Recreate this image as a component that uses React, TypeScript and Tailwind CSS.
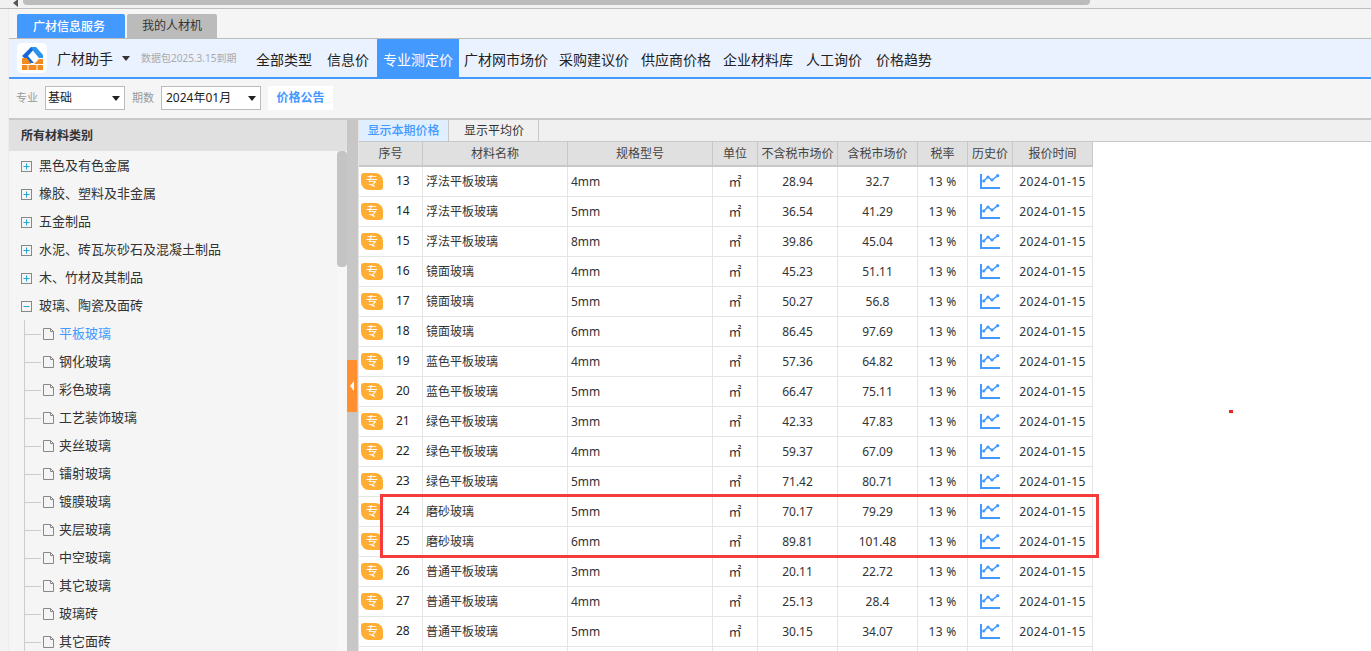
import React from "react";

const navItems = [
  { label: "全部类型", cls: "ml-[6px] mr-[3px]" },
  { label: "信息价", cls: "mr-[2px]" },
  { label: "专业测定价", cls: "bg-[#4499ff] text-white" },
  { label: "广材网市场价", cls: "pl-[5px] pr-[5px]" },
  { label: "采购建议价", cls: "" },
  { label: "供应商价格", cls: "" },
  { label: "企业材料库", cls: "" },
  { label: "人工询价", cls: "ml-[1px]" },
  { label: "价格趋势", cls: "ml-[2px]" },
];

const topCats = ["黑色及有色金属", "橡胶、塑料及非金属", "五金制品", "水泥、砖瓦灰砂石及混凝土制品", "木、竹材及其制品"];
const subCats = ["平板玻璃", "钢化玻璃", "彩色玻璃", "工艺装饰玻璃", "夹丝玻璃", "镭射玻璃", "镀膜玻璃", "夹层玻璃", "中空玻璃", "其它玻璃", "玻璃砖", "其它面砖"];

const rows = [
  [13, "浮法平板玻璃", "4mm", "28.94", "32.7"],
  [14, "浮法平板玻璃", "5mm", "36.54", "41.29"],
  [15, "浮法平板玻璃", "8mm", "39.86", "45.04"],
  [16, "镜面玻璃", "4mm", "45.23", "51.11"],
  [17, "镜面玻璃", "5mm", "50.27", "56.8"],
  [18, "镜面玻璃", "6mm", "86.45", "97.69"],
  [19, "蓝色平板玻璃", "4mm", "57.36", "64.82"],
  [20, "蓝色平板玻璃", "5mm", "66.47", "75.11"],
  [21, "绿色平板玻璃", "3mm", "42.33", "47.83"],
  [22, "绿色平板玻璃", "4mm", "59.37", "67.09"],
  [23, "绿色平板玻璃", "5mm", "71.42", "80.71"],
  [24, "磨砂玻璃", "5mm", "70.17", "79.29"],
  [25, "磨砂玻璃", "6mm", "89.81", "101.48"],
  [26, "普通平板玻璃", "3mm", "20.11", "22.72"],
  [27, "普通平板玻璃", "4mm", "25.13", "28.4"],
  [28, "普通平板玻璃", "5mm", "30.15", "34.07"],
];

const headers = ["序号", "材料名称", "规格型号", "单位", "不含税市场价", "含税市场价", "税率", "历史价", "报价时间"];
const gridCols = "grid grid-cols-[64px_145px_145px_45px_80px_80px_50px_45px_80px] w-[734px]";
const cell = "flex items-center justify-center border-r border-[#e5e5e5] min-w-0";

function Logo() {
  return (
    <svg viewBox="0 0 30 30" className="w-[30px] h-[30px]">
      <rect width="30" height="30" rx="5" fill="#ffffff" />
      <path d="M5 13 L14 4 L19 4 L11 13 L17 20 L13 20 Z" fill="#1769d8" />
      <path d="M14 4 L19 4 L26 12 L26 15 L22 15 L17 9 Z" fill="#2b93ee" />
      <path d="M5 15 H10 L14 21 H17 L22 16 H26 V27 H5 Z" fill="#f58a1f" />
      <path d="M5 21.5 H26 M11 21.5 V27 M20 21.5 V27" stroke="#ffffff" strokeWidth="1" fill="none" />
    </svg>
  );
}

function ChartIcon() {
  return (
    <svg viewBox="0 0 20 15" className="w-[20px] h-[15px]">
      <path d="M1 0 V14 H20" stroke="#4499ff" strokeWidth="2" fill="none" />
      <path d="M3.7 7 L8 3 L12 6 L17.7 1.7" stroke="#4499ff" strokeWidth="1.5" fill="none" />
      <circle cx="3.7" cy="7" r="1.6" fill="#4499ff" />
      <circle cx="8" cy="3" r="1.6" fill="#4499ff" />
      <circle cx="12" cy="6" r="1.6" fill="#4499ff" />
      <circle cx="17.7" cy="1.7" r="1.6" fill="#4499ff" />
    </svg>
  );
}

function ExpandBox({ open }: { open?: boolean }) {
  return (
    <svg viewBox="0 0 11 11" className="w-[11px] h-[11px] shrink-0">
      <rect x="0.5" y="0.5" width="10" height="10" fill="none" stroke="#888888" />
      <path d={open ? "M2.5 5.5 H8.5" : "M2.5 5.5 H8.5 M5.5 2.5 V8.5"} stroke="#22a7d8" />
    </svg>
  );
}

function FileIcon() {
  return (
    <svg viewBox="0 0 11 12" className="w-[11px] h-[12px] shrink-0">
      <path d="M0.5 0.5 H7.5 L10.5 3.5 V11.5 H0.5 Z M7.5 0.5 V3.5 H10.5" fill="none" stroke="#888888" />
    </svg>
  );
}

function FakeSelect({ value, width, pad }: { value: string; width: string; pad: string }) {
  return (
    <div className={`${width} ${pad} h-[24px] bg-white border border-[#bbbbbb] flex items-center justify-between pr-[4px] text-[12px] text-[#222]`}>
      <span>{value}</span>
      <span className="w-0 h-0 border-l-[4px] border-r-[4px] border-t-[5px] border-l-transparent border-r-transparent border-t-[#222]" />
    </div>
  );
}

export default function App() {
  return (
    <div className="relative w-[1371px] h-[651px] overflow-hidden bg-white flex flex-col font-['Noto_Sans','Noto_Sans_CJK_SC',sans-serif] text-[#333]">
      {/* top horizontal scrollbar */}
      <div className="h-[9px] shrink-0 bg-[#f1f1f1] border-b border-[#bdbdbd] flex items-start">
        <span className="ml-[13px] mt-[-1px] w-0 h-0 border-y-[4px] border-r-[5px] border-y-transparent border-r-[#555]" />
        <div className="ml-[5px] w-[1067px] h-[5px] bg-[#bcbcbc] rounded-b-[4px]" />
      </div>

      <div className="flex flex-1 min-h-0">
        {/* left strip */}
        <div className="w-[9px] shrink-0 bg-[#f3f3f3] border-r border-[#ececec]" />

        <div className="flex-1 min-w-0 flex flex-col">
          {/* tabs */}
          <div className="h-[30px] shrink-0 bg-[#f5f5f5] flex items-end pl-[8px] gap-[2px] border-b border-[#bbbbbb]">
            <div className="w-[108px] h-[24px] pt-[2px] pr-[4px] bg-[#4499ff] text-white text-[12px] font-medium flex items-center justify-center rounded-t-[2px]">广材信息服务</div>
            <div className="w-[90px] h-[24px] bg-[#bbbbbb] text-[#333] text-[12px] flex items-center justify-center rounded-t-[2px]">我的人材机</div>
          </div>

          {/* header nav */}
          <div className="h-[40px] shrink-0 bg-[#eaf1ff] border-b-2 border-[#4499ff] flex items-stretch pl-[8px]">
            <div className="flex items-center">
              <Logo />
              <span className="ml-[10px] text-[14px] text-[#222]">广材助手</span>
              <span className="ml-[9px] w-0 h-0 border-l-[4px] border-r-[4px] border-t-[5px] border-l-transparent border-r-transparent border-t-[#333]" />
              <span className="ml-[11px] text-[10px] text-[#aaaaaa] w-[103px] whitespace-nowrap">数据包2025.3.15到期</span>
            </div>
            {navItems.map((n) => (
              <div key={n.label} className={`px-[6px] pt-[2px] text-[14px] text-[#222] flex items-center whitespace-nowrap ${n.cls}`}>
                {n.label}
              </div>
            ))}
          </div>

          {/* filter bar */}
          <div className="h-[41px] shrink-0 bg-[#f5f5f5] border-b-2 border-[#c8c8c8] flex items-center pl-[7px] pb-[1px]">
            <span className="text-[11px] text-[#999999] mr-[7px]">专业</span>
            <FakeSelect value="基础" width="w-[80px]" pad="pl-[2px]" />
            <span className="text-[11px] text-[#999999] ml-[7px] mr-[7px]">期数</span>
            <FakeSelect value="2024年01月" width="w-[100px]" pad="pl-[4px]" />
            <div className="ml-[7px] w-[65px] h-[24px] bg-white text-[#4499ff] text-[12px] font-bold flex items-center justify-center">价格公告</div>
          </div>

          <div className="flex flex-1 min-h-0">
            {/* sidebar */}
            <div className="w-[338px] shrink-0 bg-[#f5f5f5] flex flex-col">
              <div className="h-[31px] shrink-0 bg-[#e0e0e0] flex items-center pl-[12px] text-[12px] font-bold text-[#333]">所有材料类别</div>
              <div className="flex flex-1 min-h-0">
                <div className="flex-1 min-w-0 pt-[1px] overflow-hidden">
                  {topCats.map((c) => (
                    <div key={c} className="h-[28px] flex items-center pl-[12px] gap-[7px] text-[13px] text-[#333]">
                      <ExpandBox />
                      <span>{c}</span>
                    </div>
                  ))}
                  <div className="h-[28px] flex items-center pl-[12px] gap-[7px] text-[13px] text-[#333]">
                    <ExpandBox open />
                    <span>玻璃、陶瓷及面砖</span>
                  </div>
                  {subCats.map((c, i) => (
                    <div key={c} className="h-[28px] flex items-center text-[13px] text-[#333]">
                      <span className="ml-[15px] w-px h-full bg-[#cccccc]" />
                      <span className="w-[16px] h-px bg-[#cccccc]" />
                      <span className="ml-[2px]"><FileIcon /></span>
                      <span className={`ml-[5px] ${i === 0 ? "text-[#4499ff]" : ""}`}>{c}</span>
                    </div>
                  ))}
                </div>
                <div className="w-[10px] shrink-0 bg-[#f7f7f7]">
                  <div className="h-[116px] bg-[#c4c4c4] rounded-[4px]" />
                </div>
              </div>
            </div>

            {/* splitter */}
            <div className="relative w-[12px] shrink-0 bg-[#c8c7c5] border-r border-[#e5e5e5]">
              <div className="absolute left-0 top-[240px] w-[10px] h-[52px] bg-[#ff8f2f] flex items-center justify-center">
                <span className="w-0 h-0 border-y-[5px] border-r-[4px] border-y-transparent border-r-white" />
              </div>
            </div>

            {/* content */}
            <div className="flex-1 min-w-0 flex flex-col text-[12px]">
              <div className="h-[22px] shrink-0 bg-[#f0f0f0] border-b border-[#c8c8c8] flex">
                <div className="w-[90px] bg-[#e0efff] text-[#4499ff] font-medium flex items-center justify-center border-r border-[#c8c8c8]">显示本期价格</div>
                <div className="w-[90px] pl-[1px] text-[#333] flex items-center justify-center border-r border-[#c8c8c8]">显示平均价</div>
              </div>
              <div className={`${gridCols} h-[25px] shrink-0 bg-[#e0e0e0] border-b-2 border-[#c8c8c8]`}>
                {headers.map((h) => (
                  <div key={h} className="flex items-center justify-center border-r border-[#c8c8c8] text-[#444] whitespace-nowrap">{h}</div>
                ))}
              </div>
              {rows.map((r) => (
                <div key={r[0]} className={`${gridCols} h-[30px] shrink-0 border-b border-[#e5e5e5] text-[#333]`}>
                  <div className={`${cell} justify-start! pl-[2px]`}>
                    <span className="w-[22px] h-[17px] bg-[#ffad33] text-white text-[12px] leading-[17px] flex items-center justify-center rounded-tl-[3px] rounded-tr-[8px] rounded-bl-[8px] rounded-br-[3px]">专</span>
                    <span className="ml-[13px] mb-[2px] text-[#222]">{r[0]}</span>
                  </div>
                  <div className={`${cell} justify-start! pl-[3px]`}>{r[1]}</div>
                  <div className={`${cell} justify-start! pl-[3px]`}>{r[2]}</div>
                  <div className={`${cell} text-[13px]`}>㎡</div>
                  <div className={cell}>{r[3]}</div>
                  <div className={cell}>{r[4]}</div>
                  <div className={`${cell} tracking-[0.3px]`}>13 %</div>
                  <div className={cell}><ChartIcon /></div>
                  <div className={`${cell} tracking-[0.4px]`}>2024-01-15</div>
                </div>
              ))}
              <div className={`${gridCols} h-[30px] shrink-0`}>
                {headers.map((h) => (
                  <div key={h} className={cell} />
                ))}
              </div>
            </div>
          </div>
        </div>
      </div>

      {/* red annotation overlays */}
      <div className="absolute left-[380px] top-[494px] w-[719px] h-[64px] border-[3px] border-[#f53b3b] pointer-events-none" />
      <div className="absolute left-[1229px] top-[410px] w-[4px] h-[3px] bg-[#f02020]" />
    </div>
  );
}
